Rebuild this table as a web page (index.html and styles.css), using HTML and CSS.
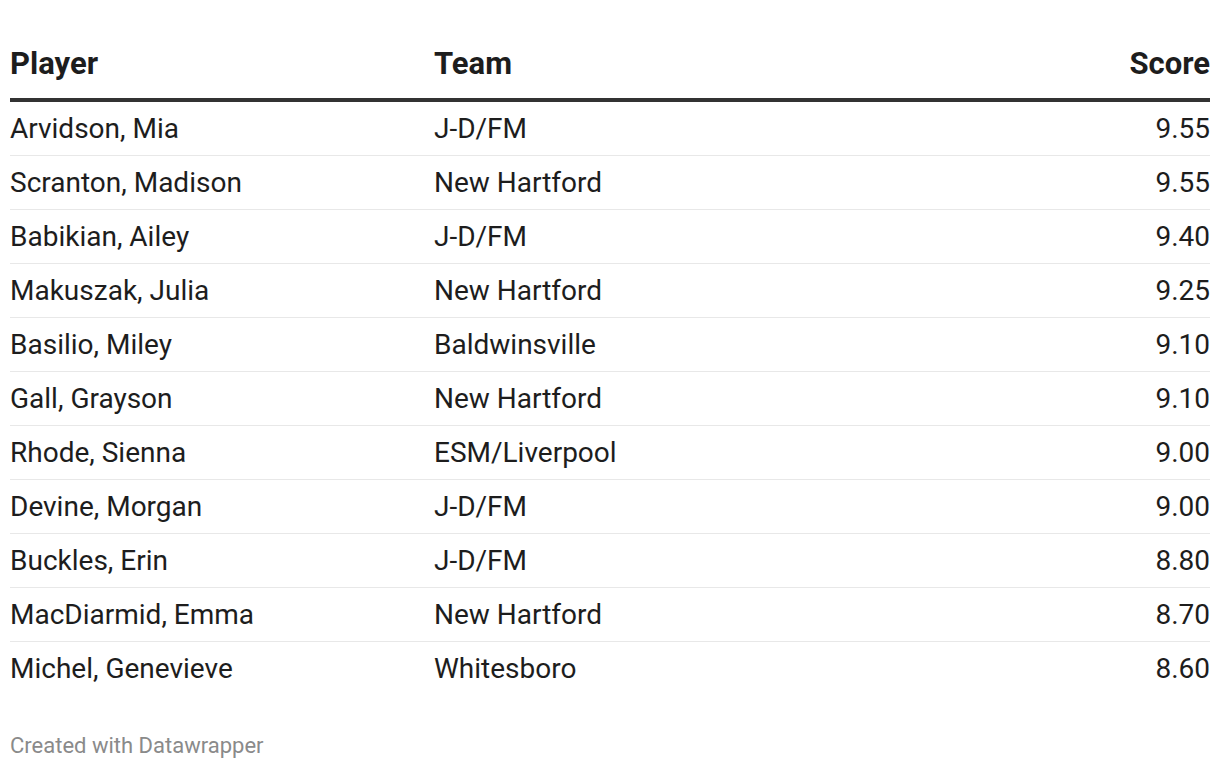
FILE: index.html
```html
<!DOCTYPE html>
<html>
<head>
<meta charset="utf-8">
<link rel="stylesheet" href="styles.css">
</head>
<body>
<div class="chart">
  <table class="tbl">
    <thead>
      <tr><th class="c-player">Player</th><th class="c-team">Team</th><th class="c-score">Score</th></tr>
    </thead>
    <tbody>
      <tr><td>Arvidson, Mia</td><td>J-D/FM</td><td class="num">9.55</td></tr>
      <tr><td>Scranton, Madison</td><td>New Hartford</td><td class="num">9.55</td></tr>
      <tr><td>Babikian, Ailey</td><td>J-D/FM</td><td class="num">9.40</td></tr>
      <tr><td>Makuszak, Julia</td><td>New Hartford</td><td class="num">9.25</td></tr>
      <tr><td>Basilio, Miley</td><td>Baldwinsville</td><td class="num">9.10</td></tr>
      <tr><td>Gall, Grayson</td><td>New Hartford</td><td class="num">9.10</td></tr>
      <tr><td>Rhode, Sienna</td><td>ESM/Liverpool</td><td class="num">9.00</td></tr>
      <tr><td>Devine, Morgan</td><td>J-D/FM</td><td class="num">9.00</td></tr>
      <tr><td>Buckles, Erin</td><td>J-D/FM</td><td class="num">8.80</td></tr>
      <tr><td>MacDiarmid, Emma</td><td>New Hartford</td><td class="num">8.70</td></tr>
      <tr><td>Michel, Genevieve</td><td>Whitesboro</td><td class="num">8.60</td></tr>
    </tbody>
  </table>
  <div class="footer">Created with Datawrapper</div>
</div>
</body>
</html>
```
FILE: styles.css
```css
html, body {
  margin: 0;
  padding: 0;
  background: #ffffff;
}
body {
  font-family: Roboto, "Liberation Sans", sans-serif;
  color: #1d1d1d;
}
.chart {
  padding: 40px 10px 0 10px;
}
.tbl {
  width: 1200px;
  border-collapse: collapse;
  table-layout: fixed;
}
.tbl th {
  font-size: 31px;
  font-weight: 700;
  text-align: left;
  height: 42px;
  padding: 0 0 16px 0;
  vertical-align: bottom;
  line-height: 36px;
  border-bottom: 4px solid #333333;
  color: #1d1d1d;
}
.c-player { width: 424px; }
.c-team { width: 500px; }
.tbl th.c-score { text-align: right; }
.tbl td {
  font-size: 28px;
  height: 53px;
  padding: 0;
  line-height: 32px;
  vertical-align: middle;
  border-bottom: 1px solid #e8e8e8;
}
.tbl tbody tr:last-child td {
  border-bottom: none;
}
.tbl td.num {
  text-align: right;
}
.footer {
  margin-top: 38px;
  font-size: 22px;
  color: #8a8a8a;
}
```
